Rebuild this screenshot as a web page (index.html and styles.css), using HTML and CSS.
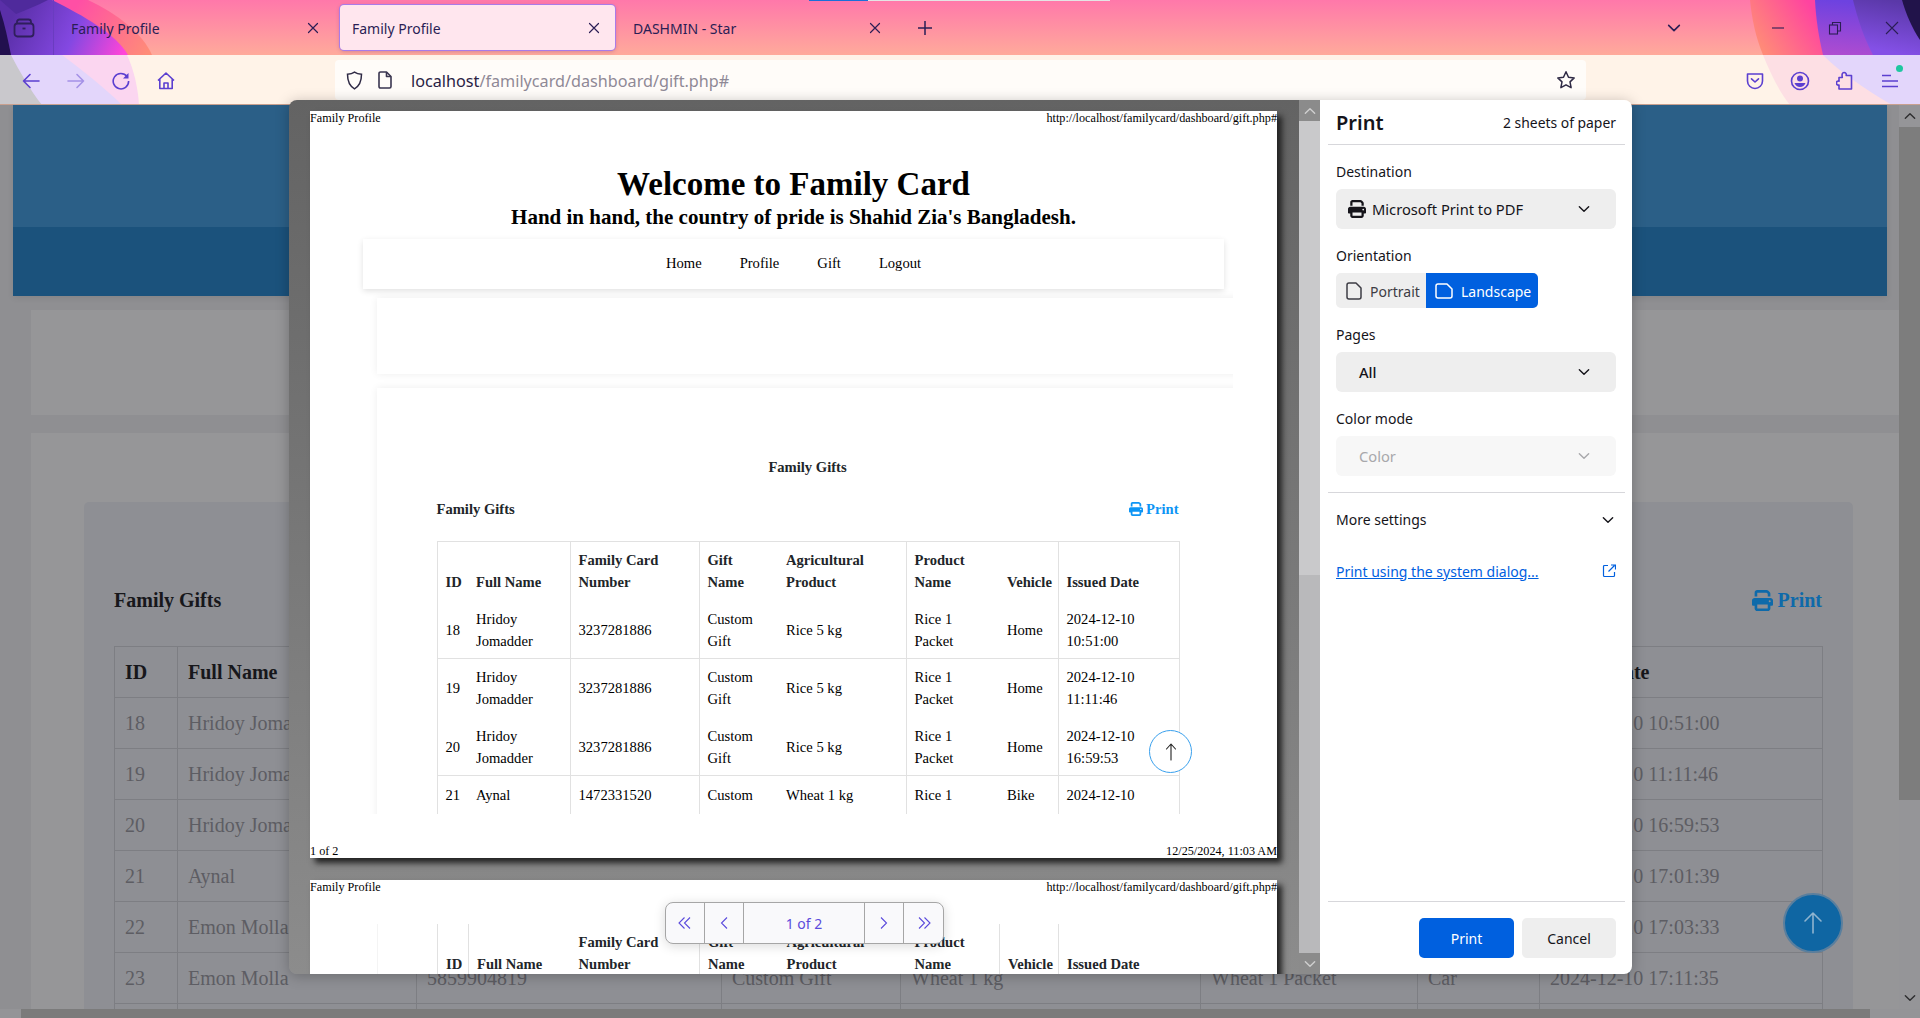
FILE: index.html
```html
<!DOCTYPE html>
<html lang="en">
<head>
    <meta charset="UTF-8">
    <title>Family Profile</title>
    <link rel="stylesheet" href="styles.css">
</head>
<body>
    <svg class="defs" width="0" height="0">
        <symbol id="fa-print" viewBox="0 0 512 512">
            <path d="M128 0C92.7 0 64 28.7 64 64v96h64V64H354.7L384 93.3V160h64V93.3c0-17-6.7-33.3-18.7-45.3L400 18.7C388 6.7 371.7 0 354.7 0H128zM384 352v32 64H128V384 368 352H384zm64 32h32c17.7 0 32-14.3 32-32V256c0-35.3-28.7-64-64-64H64c-35.3 0-64 28.7-64 64v96c0 17.7 14.3 32 32 32H64v64c0 35.3 28.7 64 64 64H384c35.3 0 64-28.7 64-64V384zM432 248a24 24 0 1 1 0 48 24 24 0 1 1 0-48z"/>
        </symbol>
        <symbol id="chev-down" viewBox="0 0 12 12">
            <path d="M2 4l4 4 4-4" fill="none" stroke="currentColor" stroke-width="1.2" stroke-linecap="round" stroke-linejoin="round"/>
        </symbol>
        <symbol id="close-x" viewBox="0 0 12 12">
            <path d="M1.5 1.5l9 9M10.5 1.5l-9 9" fill="none" stroke="currentColor" stroke-width="1.2" stroke-linecap="round"/>
        </symbol>
    </svg>

    <header class="chrome">
        <svg class="theme" viewBox="0 0 1920 105" preserveAspectRatio="none">
            <defs>
                <linearGradient id="skyGrad" x1="0" y1="0" x2="0" y2="1">
                    <stop offset="0" stop-color="#ff78aa"/>
                    <stop offset="1" stop-color="#ffaa9b"/>
                </linearGradient>
                <linearGradient id="purpleGrad" gradientUnits="userSpaceOnUse" x1="20" y1="0" x2="125" y2="50">
                    <stop offset="0" stop-color="#5a2fa8"/>
                    <stop offset="0.55" stop-color="#8448e2"/>
                    <stop offset="1" stop-color="#ff45d8"/>
                </linearGradient>
                <linearGradient id="hotGrad" gradientUnits="userSpaceOnUse" x1="80" y1="0" x2="150" y2="50">
                    <stop offset="0" stop-color="#ff4fa5"/>
                    <stop offset="1" stop-color="#ff8c78"/>
                </linearGradient>
                <linearGradient id="hotGradR" gradientUnits="userSpaceOnUse" x1="1762" y1="48" x2="1815" y2="12">
                    <stop offset="0" stop-color="#ff8a78"/>
                    <stop offset="1" stop-color="#ff43a0"/>
                </linearGradient>
                <linearGradient id="purpleGradR" gradientUnits="userSpaceOnUse" x1="1830" y1="0" x2="1825" y2="55">
                    <stop offset="0" stop-color="#6d42e0"/>
                    <stop offset="1" stop-color="#b04cd0"/>
                </linearGradient>
                <linearGradient id="deepGradR" gradientUnits="userSpaceOnUse" x1="1880" y1="50" x2="1890" y2="0">
                    <stop offset="0" stop-color="#8450e6"/>
                    <stop offset="1" stop-color="#5a38a8"/>
                </linearGradient>
            </defs>
            <rect width="1920" height="55" fill="url(#skyGrad)"/>
            <path d="M88 0C118 14 143 34 152 55H0V0Z" fill="url(#hotGrad)"/>
            <path d="M52 0C84 16 116 34 128 55H0V0Z" fill="url(#purpleGrad)"/>
            <path d="M0 0H48C36 6 26 10 16 14Z" fill="#4f2a9c"/>
            <path d="M0 10C5 25 8 40 11 55H0Z" fill="#22104e"/>
            <path d="M1750 0C1752 20 1756 38 1763 55H1920V0Z" fill="url(#hotGradR)"/>
            <path d="M1815 0C1816 20 1819 38 1823 55H1920V0Z" fill="url(#purpleGradR)"/>
            <path d="M1853 0C1858 20 1864 38 1873 55H1920V0Z" fill="url(#deepGradR)"/>
            <path d="M1902 0C1906 14 1912 28 1920 40V0Z" fill="#21134a"/>
            <rect y="55" width="1920" height="50" fill="#fff3e8"/>
            <path d="M0 55H127C134 70 138 88 139 105H0Z" fill="#fbd6f0"/>
            <path d="M0 55H62C82 70 105 88 122 105H0Z" fill="#e3d6fb"/>
            <path d="M0 55H11C20 72 30 90 42 105H0Z" fill="#c9c8cc"/>
            <path d="M1763 55C1770 72 1778 90 1790 105H1920V55Z" fill="#fddfe4"/>
            <path d="M1823 55C1840 72 1866 90 1892 105H1920V55Z" fill="#e3d6fb"/>
            <rect y="104" width="1920" height="1" fill="#c9a08f"/>
            <rect x="809" width="59" height="1" fill="#1c6fd8"/>
            <rect x="868" width="242" height="1" fill="#e4e4e4"/>
        </svg>

        <div class="tabbar">
            <div class="view-btn">
                <svg width="22" height="22" viewBox="0 0 22 22" fill="none" stroke="#2f1f5c" stroke-width="1.8">
                    <rect x="1.5" y="6.5" width="19" height="13" rx="3"/>
                    <path d="M4 6.500V5C4 3.500 5 2.500 6.500 2.500h9C17 2.500 18 3.500 18 5v1.500"/>
                    <path d="M9.500 11.500h3"/>
                </svg>
            </div>
            <div class="tab"><span>Family Profile</span><svg class="tab-x"><use href="#close-x"/></svg></div>
            <div class="tab tab-active"><span>Family Profile</span><svg class="tab-x"><use href="#close-x"/></svg></div>
            <div class="tab"><span>DASHMIN - Star</span><svg class="tab-x"><use href="#close-x"/></svg></div>
            <svg class="new-tab" width="16" height="16" viewBox="0 0 16 16"><path d="M8 1v14M1 8h14" stroke="#2b1e55" stroke-width="1.5"/></svg>
            <svg class="tab-list" width="16" height="16"><use href="#chev-down"/></svg>
            <div class="win-btn">
                <svg width="14" height="14" viewBox="0 0 14 14"><path d="M1 7h12" stroke="#2b1e55" stroke-width="1.1"/></svg>
            </div>
            <div class="win-btn">
                <svg width="14" height="14" viewBox="0 0 14 14" fill="none" stroke="#2b1e55" stroke-width="1.1"><rect x="1.5" y="4" width="8" height="9"/><path d="M4.5 4V1.5h8V10H9.5"/></svg>
            </div>
            <div class="win-btn">
                <svg width="14" height="14" viewBox="0 0 14 14"><path d="M1 1l12 12M13 1L1 13" stroke="#2b1e55" stroke-width="1.1"/></svg>
            </div>
        </div>

        <div class="toolbar">
            <div class="tool-btn">
                <svg width="18" height="18" viewBox="0 0 18 18" fill="none" stroke="#5b3fd0" stroke-width="1.6" stroke-linecap="round" stroke-linejoin="round"><path d="M17 9H1.5M8 2.5L1.5 9 8 15.5"/></svg>
            </div>
            <div class="tool-btn tool-off">
                <svg width="18" height="18" viewBox="0 0 18 18" fill="none" stroke="#5b3fd0" stroke-width="1.6" stroke-linecap="round" stroke-linejoin="round"><path d="M1 9h15.5M10 2.5L16.5 9 10 15.5"/></svg>
            </div>
            <div class="tool-btn">
                <svg width="18" height="18" viewBox="0 0 18 18" fill="none" stroke="#5b3fd0" stroke-width="1.6"><path d="M15 4.5A7.7 7.7 0 1 0 16.6 9"/><path d="M16.5 1v5.5H11z" fill="#5b3fd0" stroke="none"/></svg>
            </div>
            <div class="tool-btn">
                <svg width="18" height="18" viewBox="0 0 18 18" fill="none" stroke="#5b3fd0" stroke-width="1.6" stroke-linejoin="round"><path d="M1 8.5L9 1l8 7.5M2.8 7v9.5h12.4V7M7 16.5V11h4v5.5"/></svg>
            </div>

            <div class="urlbar">
                <svg class="url-icon" width="17" height="19" viewBox="0 0 17 19" fill="none" stroke="#2f2a45" stroke-width="1.5"><path d="M8.5 1.2c2 1.4 4.500 2 7 2.100 0 6.500-1.500 11.500-7 14.500-5.500-3-7-8-7-14.500 2.500-.1 5-.7 7-2.100z"/></svg>
                <svg class="url-icon" width="14" height="18" viewBox="0 0 14 18" fill="none" stroke="#3a3550" stroke-width="1.6" stroke-linejoin="round"><path d="M1 2.500C1 1.600 1.600 1 2.500 1H8.500L13 5.500V15.500C13 16.400 12.400 17 11.500 17H2.500C1.600 17 1 16.400 1 15.500Z"/><path d="M8.500 1V5.500H13"/></svg>
                <div class="url-text"><span class="url-host">localhost</span>/familycard/dashboard/gift.php#</div>
                <svg class="url-star" width="20" height="20" viewBox="0 0 20 20" fill="none" stroke="#2f2a45" stroke-width="1.5" stroke-linejoin="round"><path d="M10 1.800l2.500 5.400 5.700.7-4.200 4 1.100 5.800-5.100-2.900-5.100 2.900 1.100-5.800-4.200-4 5.700-.7z"/></svg>
            </div>

            <div class="tool-right">
                <div class="tool-btn">
                    <svg width="18" height="18" viewBox="0 0 18 18" fill="none" stroke="#5b3fd0" stroke-width="1.6" stroke-linecap="round" stroke-linejoin="round"><path d="M1.500 2h15v7a7.500 7.500 0 0 1-15 0z"/><path d="M5.500 6.800L9 10l3.500-3.200"/></svg>
                </div>
                <div class="tool-btn">
                    <svg width="20" height="20" viewBox="0 0 20 20"><circle cx="10" cy="10" r="8.500" fill="none" stroke="#5b3fd0" stroke-width="1.6"/><circle cx="10" cy="7.500" r="3" fill="#5b3fd0"/><path d="M4.500 12h11c-1 2.600-3 4-5.500 4s-4.500-1.400-5.500-4z" fill="#5b3fd0"/></svg>
                </div>
                <div class="tool-btn">
                    <svg width="18" height="20" viewBox="0 0 18 20" fill="none" stroke="#5b3fd0" stroke-width="1.6" stroke-linejoin="round"><path d="M8 1.500c1.700 0 2.600 1.300 2.200 3h5.300v13.500H3V14c-1.700.6-2.500-.8-2.500-2S1.300 9.600 3 10.200V6.500h3.300C5.700 3 6.300 1.500 8 1.500z"/></svg>
                </div>
                <div class="tool-btn tool-menu">
                    <svg width="18" height="14" viewBox="0 0 18 14"><path d="M1 1.500h9M1 7h16M1 12.500h16" stroke="#5b3fd0" stroke-width="1.5"/></svg>
                    <span class="menu-dot"></span>
                </div>
            </div>
        </div>
    </header>

    <div class="viewport">
        <main class="page">
            <div class="hero">
                <div class="hero-top"></div>
                <div class="hero-bottom"></div>
            </div>
            <div class="page-card page-card-short"></div>
            <div class="page-card page-card-tall">
                <section class="inner-card">
                    <div class="inner-head">
                        <h2>Family Gifts</h2>
                        <span class="inner-print"><svg width="21" height="21"><use href="#fa-print"/></svg>Print</span>
                    </div>
                    <table class="bg-table">
                        <colgroup>
                            <col class="c-id"><col class="c-name"><col class="c-card"><col class="c-gift"><col class="c-agri"><col class="c-prod"><col class="c-veh"><col class="c-date">
                        </colgroup>
                        <thead>
                            <tr><th>ID</th><th>Full Name</th><th></th><th></th><th></th><th></th><th></th><th>Issued Date</th></tr>
                        </thead>
                        <tbody>
                            <tr><td>18</td><td>Hridoy Jomadder</td><td></td><td></td><td></td><td></td><td></td><td>2024-12-10 10:51:00</td></tr>
                            <tr><td>19</td><td>Hridoy Jomadder</td><td></td><td></td><td></td><td></td><td></td><td>2024-12-10 11:11:46</td></tr>
                            <tr><td>20</td><td>Hridoy Jomadder</td><td></td><td></td><td></td><td></td><td></td><td>2024-12-10 16:59:53</td></tr>
                            <tr><td>21</td><td>Aynal</td><td></td><td></td><td></td><td></td><td></td><td>2024-12-10 17:01:39</td></tr>
                            <tr><td>22</td><td>Emon Molla</td><td></td><td></td><td></td><td></td><td></td><td>2024-12-10 17:03:33</td></tr>
                            <tr><td>23</td><td>Emon Molla</td><td>5859904819</td><td>Custom Gift</td><td>Wheat 1 kg</td><td>Wheat 1 Packet</td><td>Car</td><td>2024-12-10 17:11:35</td></tr>
                            <tr><td></td><td></td><td></td><td></td><td></td><td></td><td></td><td></td></tr>
                        </tbody>
                    </table>
                </section>
            </div>
            <button class="to-top">
                <svg width="20" height="24" viewBox="0 0 20 24" fill="none" stroke="#8fb4cf" stroke-width="1.6" stroke-linecap="round" stroke-linejoin="round"><path d="M10 22V2M2 10l8-8 8 8"/></svg>
            </button>
        </main>
        <div class="vbar">
            <div class="vbar-btn"><svg width="14" height="14" class="flip"><use href="#chev-down"/></svg></div>
            <div class="vbar-thumb"></div>
            <div class="vbar-track"></div>
            <div class="vbar-btn"><svg width="14" height="14"><use href="#chev-down"/></svg></div>
        </div>
    </div>
    <div class="hbar"><div class="hbar-btn"></div><div class="hbar-thumb"></div></div>

    <div class="print-dialog">
        <div class="preview">
            <div class="sheet">
                <div class="sheet-line"><span>Family Profile</span><span>http://localhost/familycard/dashboard/gift.php#</span></div>
                <div class="sheet-body">
                    <h1>Welcome to Family Card</h1>
                    <h3>Hand in hand, the country of pride is Shahid Zia's Bangladesh.</h3>
                    <nav class="sheet-nav"><a>Home</a><a>Profile</a><a>Gift</a><a>Logout</a></nav>
                    <div class="sheet-card sheet-card-empty"></div>
                    <div class="sheet-card sheet-card-main">
                        <div class="gifts-title">Family Gifts</div>
                        <div class="gifts-head">
                            <span>Family Gifts</span>
                            <span class="gifts-print"><svg width="14" height="14"><use href="#fa-print"/></svg>Print</span>
                        </div>
                        <table class="gift-table">
                            <colgroup>
                                <col class="g-id"><col class="g-name"><col class="g-card"><col class="g-gift"><col class="g-agri"><col class="g-prod"><col class="g-veh"><col class="g-date">
                            </colgroup>
                            <thead>
                                <tr><th>ID</th><th class="rule">Full Name</th><th class="rule">Family Card Number</th><th>Gift Name</th><th class="rule">Agricultural Product</th><th>Product Name</th><th class="rule">Vehicle</th><th>Issued Date</th></tr>
                            </thead>
                            <tbody>
                                <tr class="line row-first"><td>18</td><td class="rule">Hridoy Jomadder</td><td class="rule">3237281886</td><td>Custom Gift</td><td class="rule">Rice 5 kg</td><td>Rice 1 Packet</td><td class="rule">Home</td><td>2024-12-10 10:51:00</td></tr>
                                <tr><td>19</td><td class="rule">Hridoy Jomadder</td><td class="rule">3237281886</td><td>Custom Gift</td><td class="rule">Rice 5 kg</td><td>Rice 1 Packet</td><td class="rule">Home</td><td>2024-12-10 11:11:46</td></tr>
                                <tr class="line row-first"><td>20</td><td class="rule">Hridoy Jomadder</td><td class="rule">3237281886</td><td>Custom Gift</td><td class="rule">Rice 5 kg</td><td>Rice 1 Packet</td><td class="rule">Home</td><td>2024-12-10 16:59:53</td></tr>
                                <tr class="row-top"><td>21</td><td class="rule">Aynal</td><td class="rule">1472331520</td><td>Custom<br>&nbsp;</td><td class="rule">Wheat 1 kg</td><td>Rice 1</td><td class="rule">Bike</td><td>2024-12-10</td></tr>
                            </tbody>
                        </table>
                    </div>
                </div>
                <div class="sheet-line sheet-foot"><span>1 of 2</span><span>12/25/2024, 11:03 AM</span></div>
                <div class="sheet-up">
                    <svg width="12" height="20" viewBox="0 0 12 20" fill="none" stroke="#222" stroke-width="1.1" stroke-linecap="round" stroke-linejoin="round"><path d="M6 18V2M1.500 7L6 2l4.500 5"/></svg>
                </div>
            </div>
            <div class="sheet sheet-second">
                <div class="sheet-line"><span>Family Profile</span><span>http://localhost/familycard/dashboard/gift.php#</span></div>
                <div class="sheet-body">
                    <div class="sheet-card sheet-card-cont">
                        <table class="gift-table gift-table-cont">
                            <colgroup>
                                <col class="g-id"><col class="g-name"><col class="g-card"><col class="g-gift"><col class="g-agri"><col class="g-prod"><col class="g-veh"><col class="g-date">
                            </colgroup>
                            <thead>
                                <tr><th class="rule">ID</th><th>Full Name</th><th class="rule">Family Card Number</th><th>Gift Name</th><th>Agricultural Product</th><th class="rule">Product Name</th><th class="rule">Vehicle</th><th>Issued Date</th></tr>
                            </thead>
                        </table>
                    </div>
                </div>
            </div>
        </div>

        <div class="preview-bar">
            <div class="pbar-btn"><svg width="14" height="14" class="flip"><use href="#chev-down"/></svg></div>
            <div class="pbar-thumb"></div>
            <div class="pbar-track"></div>
            <div class="pbar-btn"><svg width="14" height="14"><use href="#chev-down"/></svg></div>
        </div>

        <aside class="panel">
            <div class="panel-head">
                <span class="panel-title">Print</span>
                <span class="panel-sheets">2 sheets of paper</span>
            </div>
            <div class="panel-body">
                <div class="field-label">Destination</div>
                <div class="select">
                    <svg class="select-printer" width="18" height="18"><use href="#fa-print"/></svg>
                    <span>Microsoft Print to PDF</span>
                    <svg class="select-chev" width="14" height="14"><use href="#chev-down"/></svg>
                </div>
                <div class="field-label">Orientation</div>
                <div class="toggle">
                    <div class="toggle-item">
                        <svg width="16" height="18" viewBox="0 0 16 18" fill="none" stroke="currentColor" stroke-width="1.5" stroke-linejoin="round"><path d="M1 3c0-1.100.9-2 2-2h7l5 5v9c0 1.100-.9 2-2 2H3c-1.100 0-2-.9-2-2z"/></svg>
                        Portrait
                    </div>
                    <div class="toggle-item toggle-on">
                        <svg width="18" height="16" viewBox="0 0 18 16" fill="none" stroke="currentColor" stroke-width="1.5" stroke-linejoin="round"><path d="M1 3c0-1.100.9-2 2-2h9l5 5v7c0 1.100-.9 2-2 2H3c-1.100 0-2-.9-2-2z"/></svg>
                        Landscape
                    </div>
                </div>
                <div class="field-label">Pages</div>
                <div class="select select-plain">
                    <span class="select-value">All</span>
                    <svg class="select-chev" width="14" height="14"><use href="#chev-down"/></svg>
                </div>
                <div class="field-label">Color mode</div>
                <div class="select select-plain select-off">
                    <span>Color</span>
                    <svg class="select-chev" width="14" height="14"><use href="#chev-down"/></svg>
                </div>
                <div class="panel-rule"></div>
                <div class="more-row">
                    <span>More settings</span>
                    <svg width="14" height="14"><use href="#chev-down"/></svg>
                </div>
                <div class="system-row">
                    <a class="system-link">Print using the system dialog...</a>
                    <svg width="14" height="14" viewBox="0 0 14 14" fill="none" stroke="#0060df" stroke-width="1.2"><path d="M6 1.500H2.500a1 1 0 0 0-1 1v9a1 1 0 0 0 1 1h9a1 1 0 0 0 1-1V8"/><path d="M6.500 7.500L12.500 1.500M9 1h4.500v4.500" /></svg>
                </div>
            </div>
            <div class="panel-foot">
                <button class="btn btn-primary">Print</button>
                <button class="btn">Cancel</button>
            </div>
        </aside>

        <div class="pager">
            <div class="pager-btn"><svg width="16" height="14" viewBox="0 0 16 14" fill="none" stroke="currentColor" stroke-width="1.100"><path d="M7.500 1.500L2 7l5.500 5.500M13 1.500L7.500 7l5.500 5.500"/></svg></div>
            <div class="pager-btn"><svg width="10" height="14" viewBox="0 0 10 14" fill="none" stroke="currentColor" stroke-width="1.100"><path d="M8 1.500L2.500 7 8 12.500"/></svg></div>
            <div class="pager-count">1 of 2</div>
            <div class="pager-btn"><svg width="10" height="14" viewBox="0 0 10 14" fill="none" stroke="currentColor" stroke-width="1.100"><path d="M2 1.500L7.500 7 2 12.500"/></svg></div>
            <div class="pager-btn pager-last"><svg width="16" height="14" viewBox="0 0 16 14" fill="none" stroke="currentColor" stroke-width="1.100"><path d="M3 1.500L8.500 7 3 12.500M8.500 1.500L14 7l-5.500 5.500"/></svg></div>
        </div>
    </div>
</body>
</html>
```

FILE: styles.css
```css
* {
    box-sizing: border-box;
}

body {
    margin: 0;
    width: 1920px;
    height: 1018px;
    overflow: hidden;
    position: relative;
    background: #8f8f92;
    font-family: "Noto Sans", "Open Sans", sans-serif;
    display: flex;
    flex-direction: column;
}

.defs {
    position: absolute;
}

.flip {
    transform: rotate(180deg);
}

/* Browser frame */
.chrome {
    position: relative;
    height: 105px;
    flex: none;
}

.theme {
    position: absolute;
    left: 0;
    top: 0;
    width: 1920px;
    height: 105px;
}

.tabbar {
    position: relative;
    height: 55px;
    display: flex;
    align-items: center;
    color: #2b1e55;
}

.view-btn {
    width: 54px;
    height: 55px;
    margin-right: 5px;
    padding-right: 5px;
    border-right: 1px solid #6a3cc0;
    display: flex;
    align-items: center;
    justify-content: center;
}

.tab {
    width: 275px;
    height: 45px;
    margin-right: 6px;
    padding: 1px 15px 0 12px;
    display: flex;
    align-items: center;
    justify-content: space-between;
    font-size: 14px;
    border-radius: 4px;
}

.tab-active {
    background: #ffe6ee;
    box-shadow: 0 0 0 1px #a97be8, 0 1px 4px rgba(60, 20, 120, 0.3);
}

.tab-x {
    width: 12px;
    height: 12px;
}

.new-tab {
    margin-left: 15px;
}

.tab-list {
    margin-left: 733px;
    margin-right: 67px;
    color: #2b1e55;
}

.win-btn {
    width: 57px;
    display: flex;
    justify-content: center;
}

.toolbar {
    position: relative;
    height: 50px;
    padding-left: 8px;
    display: flex;
    align-items: center;
}

.tool-btn {
    width: 45px;
    height: 40px;
    flex: none;
    padding-top: 1px;
    display: flex;
    align-items: center;
    justify-content: center;
    position: relative;
}

.tool-off {
    opacity: 0.45;
}

.urlbar {
    width: 1251px;
    height: 40px;
    margin-left: 147px;
    padding: 0 10px 0 11px;
    background: #fffcf9;
    border-radius: 4px;
    display: flex;
    align-items: center;
}

.url-icon {
    margin-right: 15px;
}

.url-text {
    font-size: 16.2px;
    color: #8f8996;
    margin-left: 4px;
    padding-top: 1px;
}

.url-host {
    color: #2a2244;
}

.url-star {
    margin-left: auto;
}

.tool-right {
    margin-left: auto;
    padding-right: 8px;
    display: flex;
}

.menu-dot {
    position: absolute;
    right: 9px;
    top: 5px;
    width: 7px;
    height: 7px;
    border-radius: 50%;
    background: #1fc7a0;
}

/* Page behind the dialog */
.viewport {
    flex: 1;
    display: flex;
    min-height: 0;
}

.page {
    width: 1899px;
    height: 904px;
    overflow: hidden;
    font-family: "Liberation Serif", serif;
}

.hero {
    margin: 0 12px 0 13px;
    height: 191px;
    display: flex;
    flex-direction: column;
    box-shadow: 0 2px 6px rgba(0, 0, 0, 0.08);
}

.hero-top {
    height: 122px;
    background: #2b5f87;
}

.hero-bottom {
    flex: 1;
    background: #1b527c;
}

.page-card {
    margin-left: 31px;
    background: #969698;
}

.page-card-short {
    margin-top: 14px;
    height: 105px;
}

.page-card-tall {
    margin-top: 18px;
    height: 600px;
    padding: 69px 46px 0 53px;
}

.inner-card {
    height: 560px;
    padding: 84px 31px 0 30px;
    background: #8e8f94;
    border-radius: 5px;
}

.inner-head {
    height: 28px;
    display: flex;
    align-items: center;
    justify-content: space-between;
}

.inner-head h2 {
    margin: 0;
    font-size: 20px;
    color: #17171b;
}

.inner-print {
    display: flex;
    align-items: center;
    gap: 5px;
    font-size: 20px;
    font-weight: bold;
    color: #0e6aaa;
}

.inner-print svg {
    fill: #0e6aaa;
}

.bg-table {
    width: 1708px;
    margin-top: 32px;
    border-collapse: collapse;
    table-layout: fixed;
    font-size: 20px;
    color: #5d5d63;
}

.c-id { width: 63px; }
.c-name { width: 239px; }
.c-card { width: 305px; }
.c-gift { width: 179px; }
.c-agri { width: 300px; }
.c-prod { width: 217px; }
.c-veh { width: 122px; }
.c-date { width: 283px; }

.bg-table th,
.bg-table td {
    height: 51px;
    padding: 0 10px;
    border: 1px solid #7d7e83;
    text-align: left;
    white-space: nowrap;
}

.bg-table th {
    color: #17171b;
}

.to-top {
    position: absolute;
    left: 1783px;
    top: 893px;
    width: 60px;
    height: 60px;
    padding: 0;
    border: 2px solid #5a7f9e;
    border-radius: 50%;
    background: #0f66a3;
    display: flex;
    align-items: center;
    justify-content: center;
}

.vbar {
    width: 21px;
    height: 904px;
    display: flex;
    flex-direction: column;
    background: #959598;
    color: #2e2e30;
}

.vbar-btn {
    height: 22px;
    display: flex;
    align-items: center;
    justify-content: center;
}

.vbar-thumb {
    height: 673px;
    background: #7d7d7d;
}

.vbar-track {
    flex: 1;
}

.hbar {
    height: 9px;
    flex: none;
    display: flex;
    background: #949497;
}

.hbar-btn {
    width: 21px;
}

.hbar-thumb {
    width: 1849px;
    background: #7b7b7b;
}

/* Print dialog */
.print-dialog {
    position: absolute;
    left: 289px;
    top: 100px;
    width: 1343px;
    height: 874px;
    display: flex;
    border-radius: 8px;
    overflow: hidden;
    box-shadow: 0 2px 14px rgba(0, 0, 0, 0.25);
}

.preview {
    width: 1010px;
    height: 874px;
    flex: none;
    padding: 11px 0 0 21px;
    overflow: hidden;
    background: linear-gradient(#636363, #8c8c8c);
    font-family: "Liberation Serif", serif;
    color: #000;
}

.sheet {
    position: relative;
    width: 967px;
    height: 747px;
    margin-bottom: 22px;
    display: flex;
    flex-direction: column;
    background: #fff;
    box-shadow: 5px 5px 6px #222;
}

.sheet-line {
    height: 14px;
    flex: none;
    display: flex;
    justify-content: space-between;
    font-size: 12.2px;
    line-height: 14px;
}

.sheet-foot {
    margin-top: auto;
}

.sheet-body {
    width: 923px;
    height: 689px;
    flex: none;
    overflow: hidden;
}

.sheet-body h1 {
    width: 967px;
    margin: 40px 0 0;
    font-size: 33px;
    line-height: 38px;
    text-align: center;
}

.sheet-body h3 {
    width: 967px;
    margin: 2px 0 0;
    font-size: 21px;
    line-height: 25px;
    text-align: center;
}

.sheet-nav {
    width: 861px;
    margin: 9px 0 0 53px;
    height: 50px;
    padding-bottom: 2px;
    display: flex;
    justify-content: center;
    align-items: center;
    gap: 38px;
    font-size: 14.6px;
    box-shadow: 0 2px 6px rgba(0, 0, 0, 0.12);
}

.sheet-card {
    width: 900px;
    margin-left: 67px;
    box-shadow: 0 0 8px rgba(0, 0, 0, 0.07);
}

.sheet-card-empty {
    height: 76px;
    margin-top: 9px;
}

.sheet-card-main {
    height: 500px;
    margin-top: 14px;
    padding: 68px 0 0 59.5px;
}

.gifts-title {
    width: 742px;
    font-size: 14.6px;
    font-weight: bold;
    line-height: 22px;
    text-align: center;
    color: #212529;
}

.gifts-head {
    width: 742px;
    margin-top: 20px;
    display: flex;
    justify-content: space-between;
    font-size: 14.6px;
    font-weight: bold;
    line-height: 22px;
    color: #212529;
}

.gifts-print {
    display: flex;
    align-items: center;
    gap: 3px;
    color: #0d95f5;
}

.gifts-print svg {
    fill: #0d95f5;
}

.gift-table {
    width: 742px;
    margin-top: 21px;
    border-collapse: collapse;
    table-layout: fixed;
    font-size: 14.6px;
    line-height: 22px;
    border: 1px solid #e1e1e1;
    border-bottom: none;
}

.g-id { width: 31px; }
.g-name { width: 102px; }
.g-card { width: 129px; }
.g-gift { width: 79px; }
.g-agri { width: 128px; }
.g-prod { width: 93px; }
.g-veh { width: 59px; }
.g-date { width: 121px; }

.gift-table th,
.gift-table td {
    padding: 7px 7px 7px 8px;
    text-align: left;
    vertical-align: middle;
}

.gift-table th {
    vertical-align: bottom;
    color: #212529;
}

.gift-table .rule {
    border-right: 1px solid #e1e1e1;
}

.gift-table .line td {
    border-bottom: 1px solid #e1e1e1;
}

.gift-table .row-first td {
    padding-top: 8px;
    padding-bottom: 6px;
}

.gift-table .row-top td {
    padding-top: 8px;
    vertical-align: top;
}

.sheet-up {
    position: absolute;
    left: 839px;
    top: 619px;
    width: 43px;
    height: 43px;
    border: 1px solid #39a0ed;
    border-radius: 50%;
    background: #fff;
    display: flex;
    align-items: center;
    justify-content: center;
}

.sheet-card-cont {
    height: 120px;
    margin-top: 30px;
    padding-left: 59px;
    box-shadow: none;
    border-left: 1px solid #f4f4f4;
}

.gift-table-cont {
    margin-top: 0;
    border-top: none;
    border-right: none;
}

/* Preview scrollbar */
.preview-bar {
    width: 21px;
    flex: none;
    display: flex;
    flex-direction: column;
    background: #b9b9bb;
    color: #cfcfcf;
}

.pbar-btn {
    height: 21px;
    flex: none;
    display: flex;
    align-items: center;
    justify-content: center;
    background: #8b8b8b;
}

.pbar-thumb {
    height: 454px;
    background: #c9c9cb;
}

.pbar-track {
    flex: 1;
}

/* Settings panel */
.panel {
    width: 312px;
    flex: none;
    display: flex;
    flex-direction: column;
    background: #fff;
    color: #15141a;
    font-size: 14px;
}

.panel-head {
    height: 45px;
    margin: 0 7px 0 8px;
    padding: 0 8px;
    display: flex;
    align-items: center;
    justify-content: space-between;
    border-bottom: 1px solid #d7d7db;
}

.panel-title {
    font-size: 20px;
    font-weight: 600;
}

.panel-sheets {
    font-size: 13.9px;
    margin-right: 1px;
}

.panel-body {
    flex: 1;
    padding: 0 16px;
}

.field-label {
    height: 20px;
    margin: 17px 0 7px;
    line-height: 20px;
}

.select {
    height: 40px;
    padding: 0 12px;
    display: flex;
    align-items: center;
    gap: 6px;
    background: #eeeeee;
    border-radius: 6px;
    font-size: 14.7px;
}

.select-printer {
    fill: #15141a;
}

.select-chev {
    margin-left: auto;
    margin-right: 13px;
}

.select-plain {
    padding-left: 23px;
}

.select-value {
    font-weight: 500;
}

.select-off {
    background: #f7f7f7;
    color: #a8a8ab;
}

.toggle {
    width: 202px;
    height: 35px;
    display: flex;
    background: #eeeeee;
    border-radius: 5px;
    overflow: hidden;
}

.toggle-item {
    width: 90px;
    padding: 1px 0 0 10px;
    display: flex;
    align-items: center;
    gap: 8px;
    color: #3d3c44;
}

.toggle-on {
    width: 112px;
    padding-left: 9px;
    background: #0060df;
    color: #fff;
}

.panel-rule {
    height: 1px;
    margin: 16px -9px 0 -8px;
    background: #d7d7db;
}

.more-row {
    height: 20px;
    margin-top: 17px;
    display: flex;
    align-items: center;
    justify-content: space-between;
    line-height: 20px;
}

.more-row svg {
    margin-right: 1px;
}

.system-row {
    height: 20px;
    margin-top: 31px;
    display: flex;
    align-items: center;
    justify-content: space-between;
}

.system-link {
    color: #0060df;
    text-decoration: underline;
}

.panel-foot {
    height: 73px;
    margin: 0 7px 0 8px;
    padding: 16px 9px 0 0;
    display: flex;
    justify-content: flex-end;
    gap: 8px;
    border-top: 1px solid #d7d7db;
}

.btn {
    width: 94px;
    height: 40px;
    border: none;
    border-radius: 5px;
    background: #eeeeee;
    color: #15141a;
    font: inherit;
}

.btn-primary {
    width: 95px;
    background: #0060df;
    color: #fff;
}

/* Page switcher over the preview */
.pager {
    position: absolute;
    left: 376px;
    top: 802px;
    width: 279px;
    height: 42px;
    display: flex;
    background: #f9f9fb;
    border: 1px solid #a6a6a6;
    border-radius: 8px;
    box-shadow: 0 2px 12px rgba(0, 0, 0, 0.15);
    color: #5b4bdc;
}

.pager-btn {
    width: 39px;
    flex: none;
    display: flex;
    align-items: center;
    justify-content: center;
    border-right: 1px solid #a6a6a6;
}

.pager-last {
    border-right: none;
}

.pager-count {
    flex: 1;
    display: flex;
    align-items: center;
    justify-content: center;
    border-right: 1px solid #a6a6a6;
    font-family: "Noto Sans", sans-serif;
    font-size: 14px;
}
```
